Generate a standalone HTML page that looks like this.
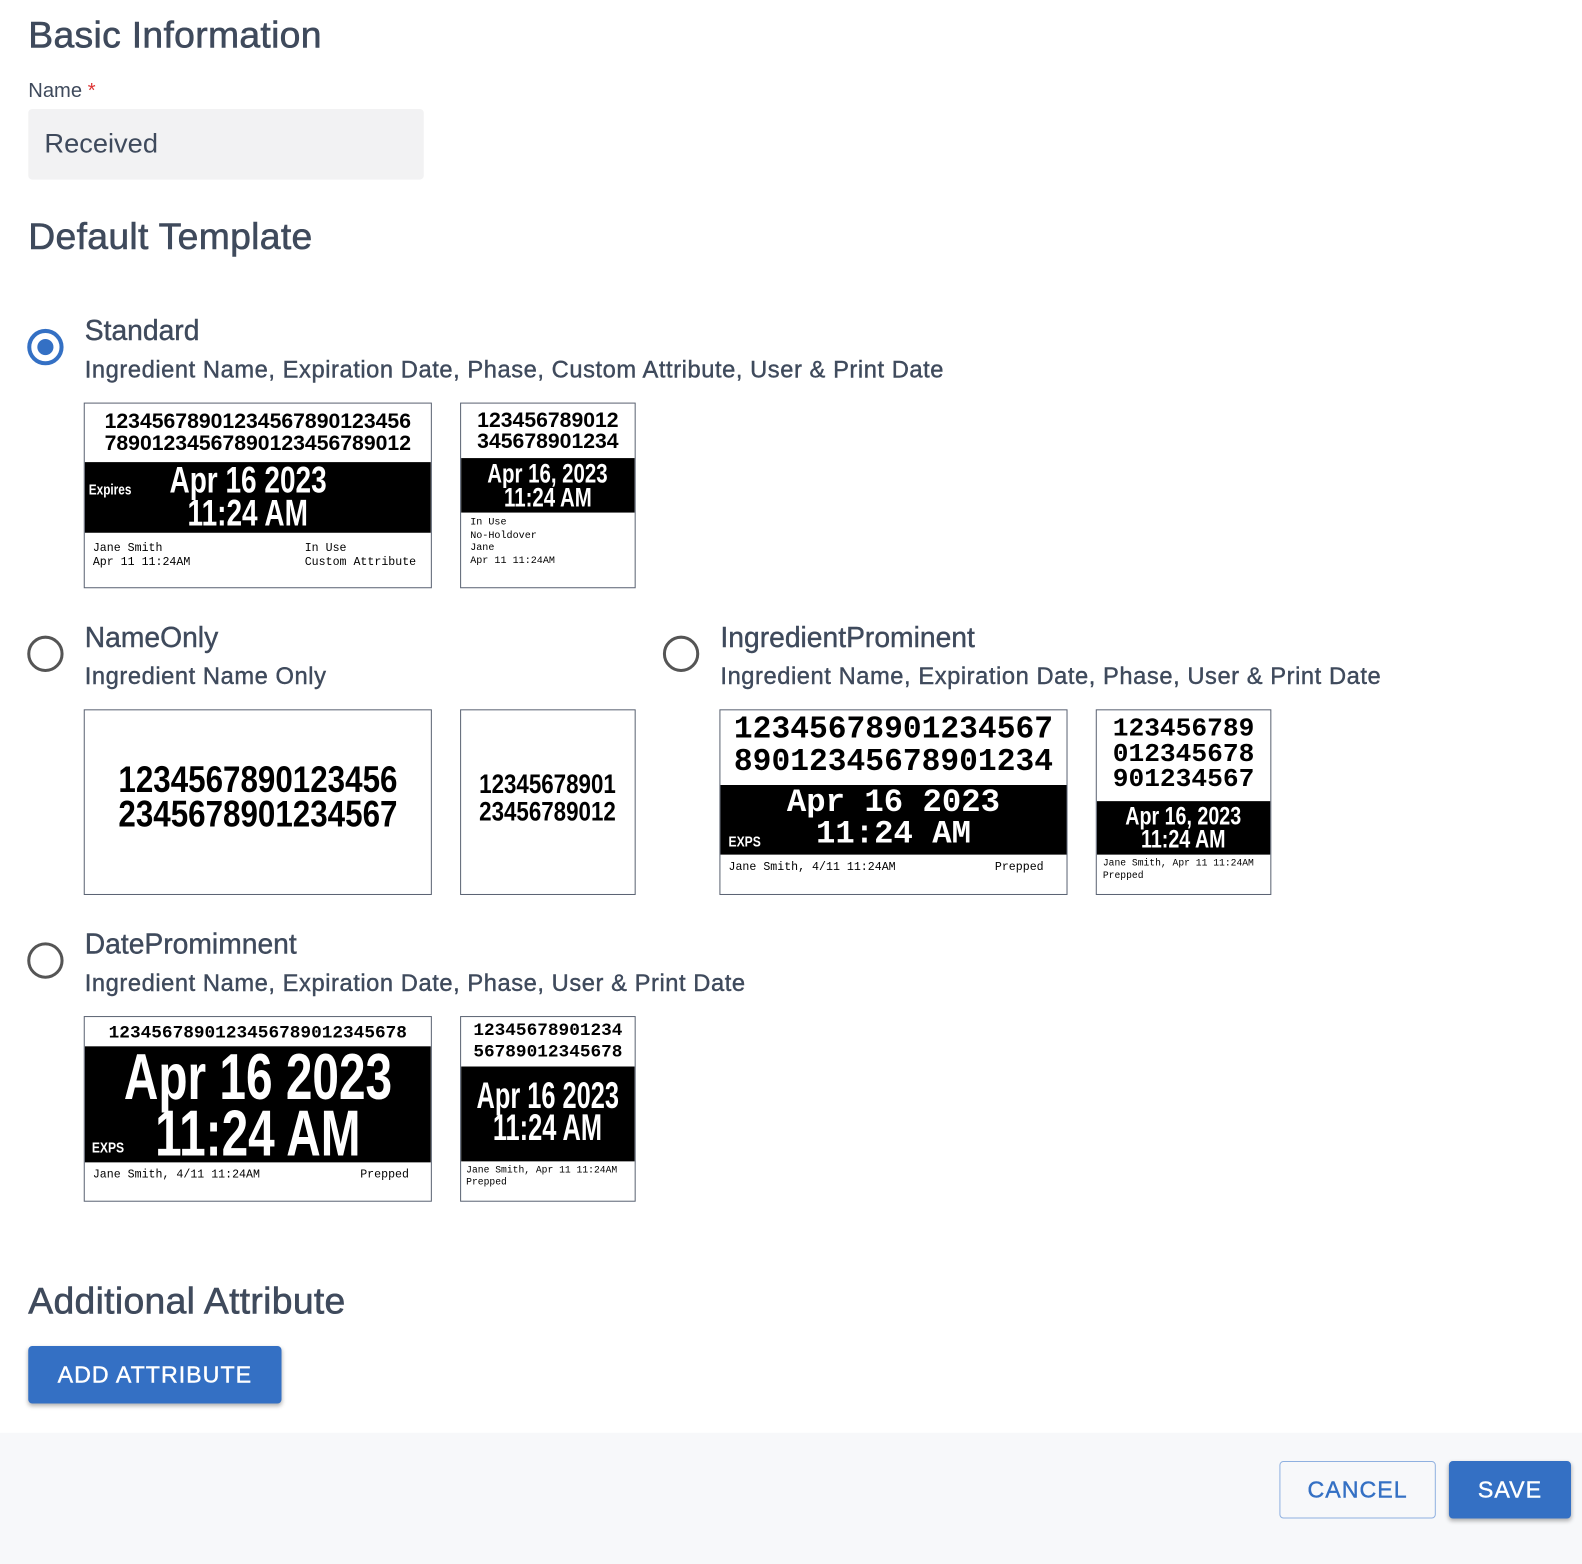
<!DOCTYPE html>
<html><head><meta charset="utf-8"><style>
body{margin:0;width:1582px;height:1536px;position:relative;background:#fff;font-family:"Liberation Sans",sans-serif;color:#3f4a5c;overflow:hidden}
#w{position:absolute;left:0;top:0;width:1568px;height:1523px;transform:scale(1.009);transform-origin:0 0}
.a{position:absolute;white-space:nowrap}
.h{font-size:37px;letter-spacing:.3px;-webkit-text-stroke:.6px #3f4a5c}
.t{font-size:28px;-webkit-text-stroke:.4px #3f4a5c}
.s{font-size:23.5px;letter-spacing:.55px;-webkit-text-stroke:.4px #3f4a5c}
.box{position:absolute;border:1.5px solid #5a6272;background:#fff;box-sizing:border-box;overflow:hidden}
.band{position:absolute;background:#000;left:0;right:0}
.c{position:absolute;left:0;right:0;text-align:center;color:#000;font-weight:bold;white-space:nowrap}
.c span{display:inline-block;margin:0 -200px}
.w{color:#fff}
.m{position:absolute;font-family:"Liberation Mono",monospace;color:#000;white-space:pre}
.radio{position:absolute;width:36px;height:36px;border-radius:50%;box-sizing:border-box;border:3px solid #555}
.radio.on{border:4px solid #3470c4}
.radio.on::after{content:"";position:absolute;left:6px;top:6px;width:16px;height:16px;border-radius:50%;background:#3470c4}
.btn{position:absolute;box-sizing:border-box;border-radius:4px;font-size:23px;letter-spacing:1px;display:flex;align-items:center;justify-content:center;-webkit-text-stroke:.4px currentColor}
</style></head><body><div id="w">
<div class="a h" style="left:28px;top:14px">Basic Information</div>
<div class="a" style="left:28px;top:79px;font-size:20px">Name <span style="color:#d33">*</span></div>
<div class="a" style="left:28px;top:108px;width:392px;height:70px;background:#f2f2f3;border-radius:4px"></div>
<div class="a" style="left:44px;top:127px;font-size:27px">Received</div>
<div class="a h" style="left:28px;top:214px">Default Template</div>

<div class="radio on" style="left:27px;top:326px"></div>
<div class="a t" style="left:84px;top:312px">Standard</div>
<div class="a s" style="left:84px;top:353px">Ingredient Name, Expiration Date, Phase, Custom Attribute, User &amp; Print Date</div>

<div class="box" style="left:83px;top:399px;width:345px;height:184px">
 <div class="c" style="top:7px;font-size:21px;line-height:22px">12345678901234567890123456<br>78901234567890123456789012</div>
 <div class="band" style="top:58px;height:70px"></div>
 <div class="c w" style="top:58px;left:0;width:50px;font-size:15px;line-height:55px"><span style="transform:scaleX(.78)">Expires</span></div>
 <div class="c w" style="top:59px;left:60px;right:80px;font-size:37px;line-height:33px"><span style="transform:scaleX(.75)">Apr 16 2023</span><br><span style="transform:scaleX(.75)">11:24 AM</span></div>
 <div class="m" style="left:8px;top:137px;font-size:11.5px;line-height:14px">Jane Smith
Apr 11 11:24AM</div>
 <div class="m" style="left:218px;top:137px;font-size:11.5px;line-height:14px">In Use
Custom Attribute</div>
</div>
<div class="box" style="left:456px;top:399px;width:174px;height:184px">
 <div class="c" style="top:6px;font-size:21px;line-height:21px">123456789012<br>345678901234</div>
 <div class="band" style="top:54px;height:54px"></div>
 <div class="c w" style="top:57px;font-size:27px;line-height:24px"><span style="transform:scaleX(.75)">Apr 16, 2023</span><br><span style="transform:scaleX(.75)">11:24 AM</span></div>
 <div class="m" style="left:9px;top:113px;font-size:10px;line-height:12.7px">In Use
No-Holdover
Jane
Apr 11 11:24AM</div>
</div>

<div class="radio" style="left:27px;top:630px"></div>
<div class="a t" style="left:84px;top:616px">NameOnly</div>
<div class="a s" style="left:84px;top:657px">Ingredient Name Only</div>
<div class="box" style="left:83px;top:703px;width:345px;height:184px">
 <div class="c" style="top:52px;font-size:37px;line-height:34px"><span style="transform:scaleX(.84)">1234567890123456</span><br><span style="transform:scaleX(.84)">2345678901234567</span></div>
</div>
<div class="box" style="left:456px;top:703px;width:174px;height:184px">
 <div class="c" style="top:60px;font-size:27px;line-height:27px"><span style="transform:scaleX(.82)">12345678901</span><br><span style="transform:scaleX(.82)">23456789012</span></div>
</div>

<div class="radio" style="left:657px;top:630px"></div>
<div class="a t" style="left:714px;top:616px">IngredientProminent</div>
<div class="a s" style="left:714px;top:657px">Ingredient Name, Expiration Date, Phase, User &amp; Print Date</div>
<div class="box" style="left:713px;top:703px;width:345px;height:184px">
 <div class="c" style="top:4px;font-family:'Liberation Mono',monospace;font-size:31px;line-height:32px">12345678901234567<br>89012345678901234</div>
 <div class="band" style="top:74px;height:69px"></div>
 <div class="c w" style="top:76px;font-family:'Liberation Mono',monospace;font-size:32px;line-height:31px">Apr 16 2023<br>11:24 AM</div>
 <div class="a w" style="left:8px;top:122px;font-weight:bold;font-size:15px;color:#fff"><span style="display:inline-block;transform:scaleX(.8);transform-origin:left">EXPS</span></div>
 <div class="m" style="left:8px;top:149px;font-size:11.5px">Jane Smith, 4/11 11:24AM</div>
 <div class="m" style="left:272px;top:149px;font-size:11.5px">Prepped</div>
</div>
<div class="box" style="left:1086px;top:703px;width:174px;height:184px">
 <div class="c" style="top:6px;font-family:'Liberation Mono',monospace;font-size:26px;line-height:25px">123456789<br>012345678<br>901234567</div>
 <div class="band" style="top:90px;height:53px"></div>
 <div class="c w" style="top:94px;font-size:25px;line-height:23px"><span style="transform:scaleX(.78)">Apr 16, 2023</span><br><span style="transform:scaleX(.78)">11:24 AM</span></div>
 <div class="m" style="left:6px;top:146px;font-size:9.6px;line-height:12px">Jane Smith, Apr 11 11:24AM
Prepped</div>
</div>

<div class="radio" style="left:27px;top:934px"></div>
<div class="a t" style="left:84px;top:920px">DatePromimnent</div>
<div class="a s" style="left:84px;top:961px">Ingredient Name, Expiration Date, Phase, User &amp; Print Date</div>
<div class="box" style="left:83px;top:1007px;width:345px;height:184px">
 <div class="c" style="top:5px;font-family:'Liberation Mono',monospace;font-size:17.6px;line-height:22px;font-weight:600">1234567890123456789012345678</div>
 <div class="band" style="top:29px;height:115px"></div>
 <div class="c w" style="top:31px;font-size:64px;line-height:56px"><span style="transform:scaleX(.74)">Apr 16 2023</span><br><span style="transform:scaleX(.74)">11:24 AM</span></div>
 <div class="a w" style="left:7px;top:121px;font-weight:bold;font-size:15px;color:#fff"><span style="display:inline-block;transform:scaleX(.8);transform-origin:left">EXPS</span></div>
 <div class="m" style="left:8px;top:150px;font-size:11.5px">Jane Smith, 4/11 11:24AM</div>
 <div class="m" style="left:273px;top:150px;font-size:11.5px">Prepped</div>
</div>
<div class="box" style="left:456px;top:1007px;width:174px;height:184px">
 <div class="c" style="top:4px;font-family:'Liberation Mono',monospace;font-size:17.6px;line-height:21px;font-weight:600">12345678901234<br>56789012345678</div>
 <div class="band" style="top:49px;height:94px"></div>
 <div class="c w" style="top:62px;font-size:37px;line-height:32px"><span style="transform:scaleX(.68)">Apr 16 2023</span><br><span style="transform:scaleX(.68)">11:24 AM</span></div>
 <div class="m" style="left:5px;top:146px;font-size:9.6px;line-height:12px">Jane Smith, Apr 11 11:24AM
Prepped</div>
</div>

<div class="a h" style="left:28px;top:1269px">Additional Attribute</div>
<div class="btn" style="left:28px;top:1334px;width:251px;height:57px;background:#3470c4;color:#fff;box-shadow:0 2px 4px rgba(0,0,0,.3)">ADD ATTRIBUTE</div>

<div class="a" style="left:0;top:1420px;width:1600px;height:130px;background:#f7f8fa"></div>
<div class="btn" style="left:1268px;top:1448px;width:155px;height:57px;border:1px solid #8fb0e0;color:#3470c4">CANCEL</div>
<div class="btn" style="left:1436px;top:1448px;width:121px;height:57px;background:#3470c4;color:#fff;box-shadow:0 2px 4px rgba(0,0,0,.3)">SAVE</div>
</div></body></html>
